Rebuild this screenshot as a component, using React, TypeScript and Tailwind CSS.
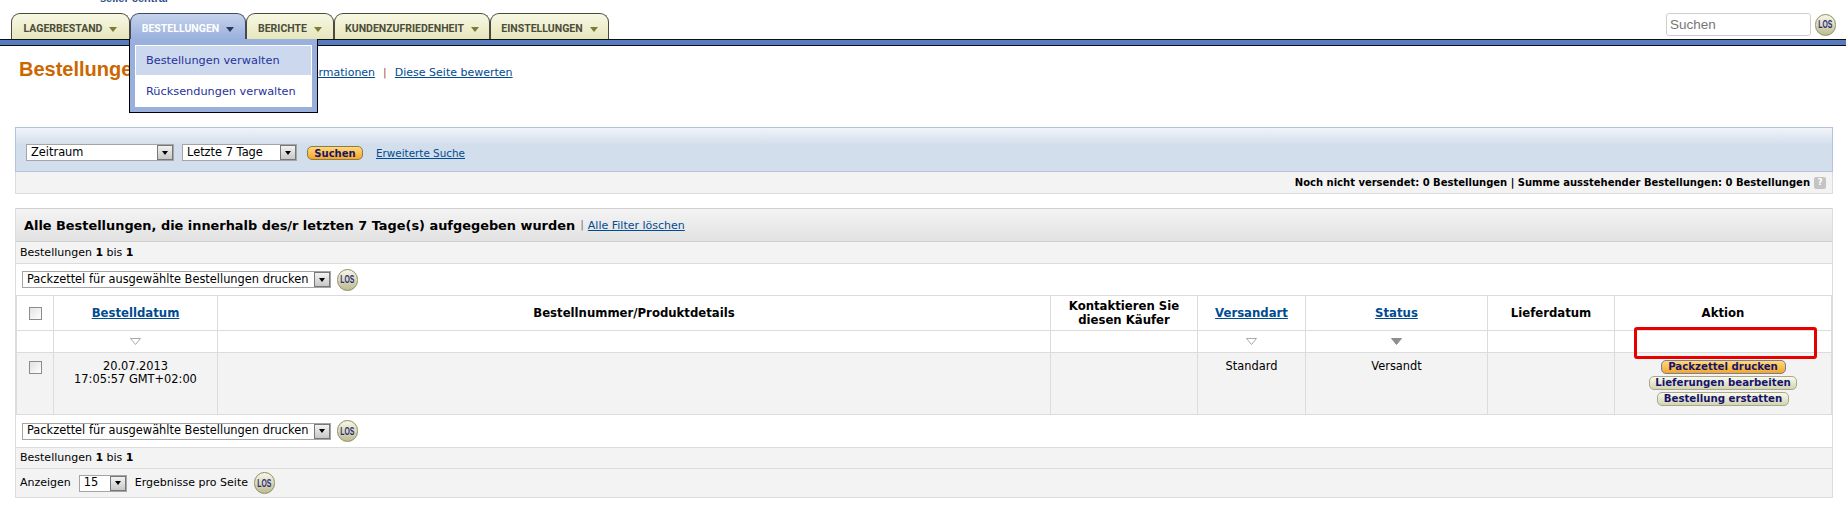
import React from "react";

const verdana = "font-['DejaVu_Sans','Liberation_Sans',sans-serif]";

const tabs = [
  { label: "LAGERBESTAND", width: "w-[119px]" },
  { label: "BESTELLUNGEN", width: "w-[116px]", active: true },
  { label: "BERICHTE", width: "w-[88px]" },
  { label: "KUNDENZUFRIEDENHEIT", width: "w-[156px]" },
  { label: "EINSTELLUNGEN", width: "w-[119px]" },
];

function Los({ className = "" }: { className?: string }) {
  return (
    <span
      className={`inline-flex h-[22px] w-[21px] shrink-0 items-center justify-center rounded-full border border-[#8f8d64] bg-gradient-to-b from-[#f8f7e8] to-[#bdbb90] font-['Liberation_Sans',sans-serif] text-[11px] font-bold text-[#2a2f7a] ${className}`}
    >
      <span className="inline-block scale-x-[0.62]">LOS</span>
    </span>
  );
}

function FakeSelect({
  value,
  className,
  textClass = "",
}: {
  value: string;
  className: string;
  textClass?: string;
}) {
  return (
    <div
      className={`flex h-[17px] items-center justify-between border border-[#a5a5a5] bg-white pl-[4px] text-[11.4px] text-black ${className}`}
    >
      <span className={`whitespace-nowrap ${textClass}`}>{value}</span>
      <span className="flex h-[15px] w-[16px] items-center justify-center border border-[#777] bg-gradient-to-b from-[#f2f2f2] to-[#c8c8c8]">
        <span className="h-0 w-0 border-x-[3px] border-t-[4px] border-x-transparent border-t-black" />
      </span>
    </div>
  );
}

function ActionButton({
  label,
  className,
  primary,
}: {
  label: string;
  className: string;
  primary?: boolean;
}) {
  return (
    <span
      className={`flex h-[14px] items-center justify-center rounded-[5px] border text-[10.2px] font-bold text-[#15156b] ${
        primary
          ? "border-[#6f7fa8] bg-gradient-to-b from-[#ffd976] to-[#f5a623]"
          : "border-[#a8a88a] bg-gradient-to-b from-[#fafaee] to-[#d4d3b2]"
      } ${className}`}
    >
      {label}
    </span>
  );
}

function SortArrow({ filled }: { filled?: boolean }) {
  return (
    <svg width="11" height="7" viewBox="0 0 11 7" className="mx-auto block">
      <path
        d="M0.5 0.5h10L5.5 6.5z"
        fill={filled ? "#8e8e8e" : "#fff"}
        stroke={filled ? "#8e8e8e" : "#a9a9a9"}
      />
    </svg>
  );
}

const thClass =
  "border border-[#dcdcdc] px-1 text-center align-middle text-[11.7px] leading-[14px] font-bold text-black";
const headLink = "font-bold text-[#004b91] underline";
const filterCell = "border border-[#dcdcdc] align-middle";
const dataCell = "border border-[#dcdcdc] px-1 pt-[5px] align-top text-center text-[11.4px] text-black";

export default function App() {
  return (
    <div className={`relative h-[520px] w-[1846px] overflow-hidden bg-white ${verdana} text-[11px] text-black`}>
      {/* top strip */}
      <div className="h-[13px] overflow-hidden pl-[100px]">
        <div className="mt-[-8px] font-['Liberation_Sans',sans-serif] text-[11px] font-bold leading-[13px] text-[#2d4f8b]">seller central</div>
      </div>

      {/* tab row */}
      <div className="relative flex h-[26px] items-end justify-between pl-[11px] pr-[10px]">
        <div className="flex h-full">
          {tabs.map((tab) => (
            <div
              key={tab.label}
              className={`relative flex h-full items-center justify-center gap-[7px] rounded-t-[9px] border border-b-0 pt-[5px] font-['Roboto',sans-serif] text-[10.5px] font-bold ${tab.width} ${
                tab.active
                  ? "z-10 h-[27px] border-[#3c4a66] bg-gradient-to-b from-[#c6d3ec] to-[#9ab0dc] text-white"
                  : "border-[#4a4a3c] bg-gradient-to-b from-[#f8f8e4] to-[#e6e6bd] text-[#4c4c3a]"
              }`}
            >
              {tab.label}
              <span
                className={`h-0 w-0 border-x-[4px] border-t-[5px] border-x-transparent ${
                  tab.active ? "border-t-[#2c3a5c]" : "border-t-[#7c7a36]"
                }`}
              />
            </div>
          ))}
        </div>
        <div className="mb-[3px] flex items-center gap-[4px]">
          <div className="flex h-[23px] w-[145px] items-center rounded-[3px] border border-[#cfcfcf] bg-white pl-[3px] pt-[2px] font-['Liberation_Sans',sans-serif] text-[13.5px] text-[#777]">
            Suchen
          </div>
          <Los />
        </div>
      </div>
      <div className="h-[7px] border-y border-[#111] bg-[#587ac0]" />

      {/* dropdown */}
      <div className="absolute left-[129px] top-[39px] z-20 w-[189px] border border-t-0 border-black bg-[#9ab0dc] px-[5px] pb-[5px] pt-[6px]">
        <div className="flex h-[30px] items-center border border-b-0 border-white bg-[#ccd8ee] pl-[10px] pt-[1px] text-[11.3px] text-[#26329a]">
          Bestellungen verwalten
        </div>
        <div className="flex h-[32px] items-center bg-white pl-[11px] pt-[2px] text-[11.3px] text-[#26329a]">
          Rücksendungen verwalten
        </div>
      </div>

      {/* page title */}
      <div className="flex h-[81px] items-start pl-[19px] pt-[11px]">
        <h1 className="font-['Liberation_Sans',sans-serif] text-[20px] font-bold leading-[24px] text-[#cc6600]">
          Bestellungen verwalten
        </h1>
      </div>
      <div className="absolute left-[252px] top-[65px] flex gap-[8px] text-[11px]">
        <span className="text-[#004b91] underline">Weitere Informationen</span>
        <span className="text-[#b04a4a]">|</span>
        <span className="text-[#004b91] underline">Diese Seite bewerten</span>
      </div>

      <div className="pl-[15px] pr-[13px]">
        {/* search panel */}
        <div className="h-[45px] border border-[#b6c2dc] bg-gradient-to-b from-[#f0f4fa] via-[#d2deeb] via-40% to-[#d2deeb]">
          <div className="flex h-full items-start pl-[10px] pt-[16px]">
            <FakeSelect value="Zeitraum" className="w-[148px]" textClass="pt-[1px]" />
            <FakeSelect value="Letzte 7 Tage" className="ml-[8px] w-[115px]" textClass="pt-[1px]" />
            <span className="ml-[10px] mt-[2px] flex h-[14px] w-[56px] items-center justify-center rounded-[5px] border border-[#8a7a50] bg-gradient-to-b from-[#ffd976] to-[#f5a623] text-[10px] font-bold text-[#15156b]">
              Suchen
            </span>
            <span className="ml-[13px] mt-[2px] text-[10.4px] text-[#004b91] underline">Erweiterte Suche</span>
          </div>
        </div>
        <div className="flex h-[22px] items-center justify-end border-x border-b border-[#dcdcdc] bg-[#f3f3f3] pr-[6px] text-[10px] font-bold">
          <span>Noch nicht versendet: 0 Bestellungen | Summe ausstehender Bestellungen: 0 Bestellungen</span>
          <span className="ml-[4px] flex h-[12px] w-[12px] items-center justify-center rounded-[2px] bg-[#c4c4c4] text-[9px] text-white">?</span>
        </div>

        {/* orders panel */}
        <div className="mt-[14px] border-x border-[#dcdcdc]">
          <div className="flex h-[34px] items-center border-y border-[#d0d0d0] bg-gradient-to-b from-[#f4f4f4] to-[#e2e2e2] pl-[8px] pt-[1px]">
            <span className="text-[12.9px] font-bold">Alle Bestellungen, die innerhalb des/r letzten 7 Tage(s) aufgegeben wurden</span>
            <span className="ml-[5px] text-[#777]">|</span>
            <span className="ml-[4px] mt-[2px] text-[11px] text-[#004b91] underline">Alle Filter löschen</span>
          </div>
          <div className="flex h-[22px] items-center border-b border-[#dcdcdc] bg-[#f3f3f3] pl-[4px] pt-[1px]">
            <span>
              Bestellungen <b>1</b> bis <b>1</b>
            </span>
          </div>
          <div className="flex h-[31px] items-center gap-[6px] pl-[6px]">
            <FakeSelect value="Packzettel für ausgewählte Bestellungen drucken" className="w-[309px]" />
            <Los />
          </div>

          <table className="w-full table-fixed border-collapse">
            <colgroup>
              <col className="w-[37px]" />
              <col className="w-[164px]" />
              <col />
              <col className="w-[147px]" />
              <col className="w-[108px]" />
              <col className="w-[182px]" />
              <col className="w-[127px]" />
              <col className="w-[217px]" />
            </colgroup>
            <thead>
              <tr className="h-[35px]">
                <th className={thClass}>
                  <span className="mx-auto block h-[13px] w-[13px] border border-[#8c8c8c] bg-gradient-to-br from-[#e4e4e4] to-white" />
                </th>
                <th className={thClass}>
                  <span className={headLink}>Bestelldatum</span>
                </th>
                <th className={thClass}>Bestellnummer/Produktdetails</th>
                <th className={thClass}>
                  Kontaktieren Sie
                  <br />
                  diesen Käufer
                </th>
                <th className={thClass}>
                  <span className={headLink}>Versandart</span>
                </th>
                <th className={thClass}>
                  <span className={headLink}>Status</span>
                </th>
                <th className={thClass}>Lieferdatum</th>
                <th className={thClass}>Aktion</th>
              </tr>
            </thead>
            <tbody>
              <tr className="h-[22px]">
                <td className={filterCell} />
                <td className={filterCell}>
                  <SortArrow />
                </td>
                <td className={filterCell} />
                <td className={filterCell} />
                <td className={filterCell}>
                  <SortArrow />
                </td>
                <td className={filterCell}>
                  <SortArrow filled />
                </td>
                <td className={filterCell} />
                <td className={filterCell} />
              </tr>
              <tr className="h-[62px] bg-[#f3f3f3]">
                <td className={dataCell}>
                  <span className="mx-auto mt-[3px] block h-[13px] w-[13px] border border-[#8c8c8c] bg-gradient-to-br from-[#e0e0e0] to-white" />
                </td>
                <td className={`${dataCell} !pt-[7px] leading-[13px]`}>
                  20.07.2013
                  <br />
                  17:05:57 GMT+02:00
                </td>
                <td className={dataCell} />
                <td className={dataCell} />
                <td className={dataCell}>Standard</td>
                <td className={dataCell}>Versandt</td>
                <td className={dataCell} />
                <td className={`${dataCell} !px-0 !pt-[7px]`}>
                  <div className="flex flex-col items-center gap-[2px]">
                    <ActionButton primary label="Packzettel drucken" className="w-[125px]" />
                    <ActionButton label="Lieferungen bearbeiten" className="w-[148px]" />
                    <ActionButton label="Bestellung erstatten" className="w-[132px]" />
                  </div>
                </td>
              </tr>
            </tbody>
          </table>

          <div className="flex h-[32px] items-center gap-[6px] pl-[6px]">
            <FakeSelect value="Packzettel für ausgewählte Bestellungen drucken" className="w-[309px]" />
            <Los />
          </div>
          <div className="flex h-[22px] items-center border-y border-[#dcdcdc] bg-[#f3f3f3] pl-[4px]">
            <span>
              Bestellungen <b>1</b> bis <b>1</b>
            </span>
          </div>
          <div className="flex h-[29px] items-center border-b border-[#dcdcdc] bg-[#f3f3f3] pl-[4px]">
            <span>Anzeigen</span>
            <FakeSelect value="15" className="ml-[8px] w-[48px]" />
            <span className="ml-[8px]">Ergebnisse pro Seite</span>
            <Los className="ml-[6px]" />
          </div>
        </div>
      </div>

      {/* red annotation box */}
      <div className="absolute left-[1634px] top-[327px] h-[32px] w-[183px] rounded-[3px] border-[3px] border-[#e60000]" />
    </div>
  );
}
